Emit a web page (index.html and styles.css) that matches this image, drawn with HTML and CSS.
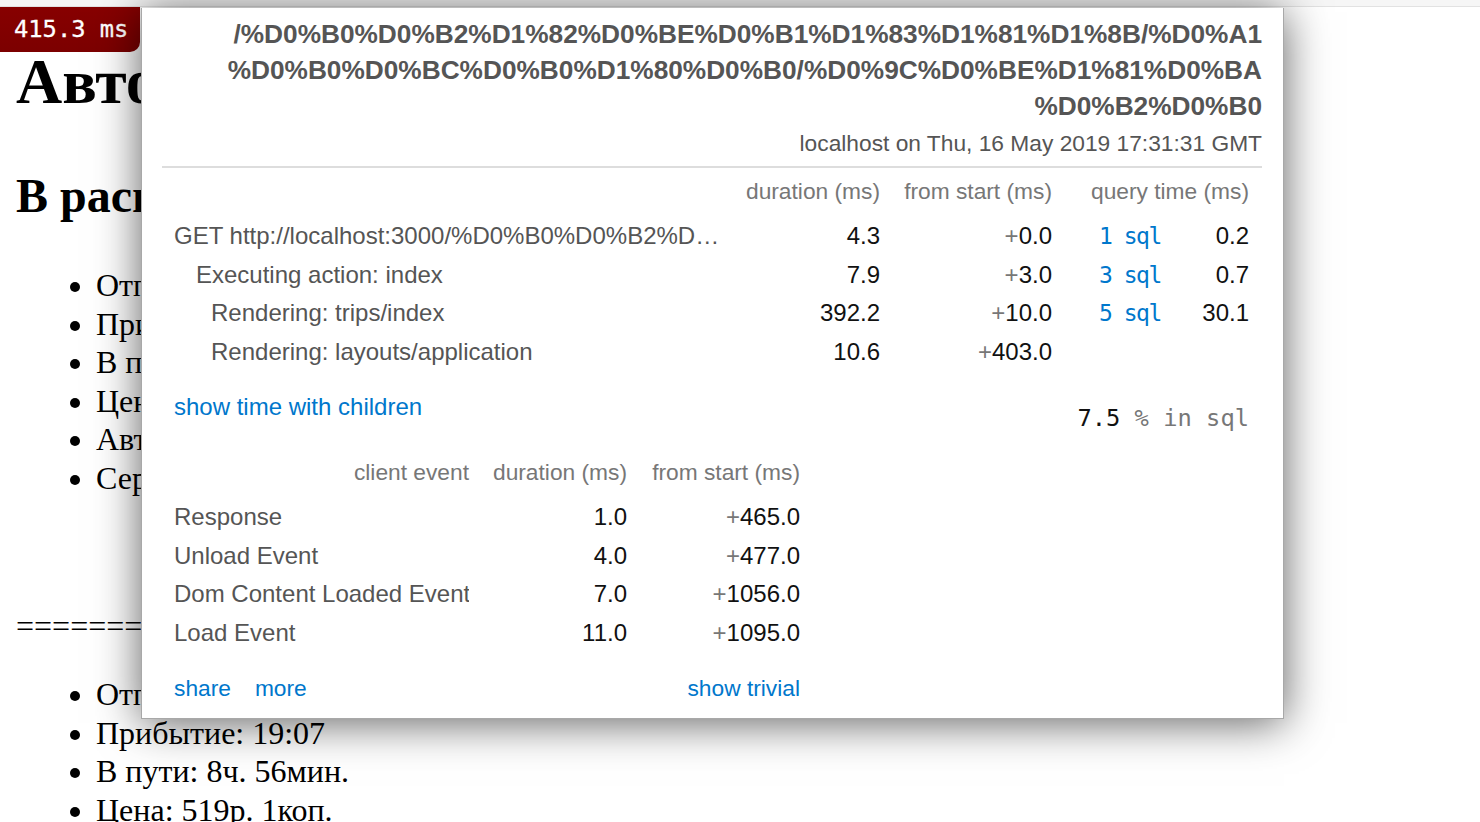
FILE: index.html
```html
<!DOCTYPE html>
<html lang="ru">
<head>
<meta charset="utf-8">
<title>Автобусы</title>
<link rel="stylesheet" href="styles.css">
</head>
<body>
<div class="topbar"></div>
<main class="page">
  <h1>Автобусы</h1>
  <h2>В расписании найдено 2 рейса</h2>
  <ul class="trip">
    <li>Отправление: 08:30</li>
    <li>Прибытие: 17:12</li>
    <li>В пути: 8ч. 42мин.</li>
    <li>Цена: 519р. 1коп.</li>
    <li>Автобус: Неоплан</li>
    <li>Серия: АА 123</li>
  </ul>
  <p class="sep">========================================</p>
  <ul class="trip second">
    <li>Отправление: 10:11</li>
    <li>Прибытие: 19:07</li>
    <li>В пути: 8ч. 56мин.</li>
    <li>Цена: 519р. 1коп.</li>
  </ul>
</main>

<div class="mp-badge">415.3 ms</div>

<div class="mp-popup">
  <div class="mp-info">
    <div class="mp-name">/%D0%B0%D0%B2%D1%82%D0%BE%D0%B1%D1%83%D1%81%D1%8B/%D0%A1<br>%D0%B0%D0%BC%D0%B0%D1%80%D0%B0/%D0%9C%D0%BE%D1%81%D0%BA<br>%D0%B2%D0%B0</div>
    <div class="mp-server">localhost on Thu, 16 May 2019 17:31:31 GMT</div>
  </div>

  <div class="mp-timings">
    <div class="th"></div>
    <div class="th num">duration (ms)</div>
    <div class="th num">from start (ms)</div>
    <div class="th num span2">query time (ms)</div>

    <div class="lbl d0">GET http://localhost:3000/%D0%B0%D0%B2%D…</div>
    <div class="num">4.3</div>
    <div class="num"><span class="plus">+</span>0.0</div>
    <div class="sql"><a href="#">1 sql</a></div>
    <div class="num">0.2</div>

    <div class="lbl d1">Executing action: index</div>
    <div class="num">7.9</div>
    <div class="num"><span class="plus">+</span>3.0</div>
    <div class="sql"><a href="#">3 sql</a></div>
    <div class="num">0.7</div>

    <div class="lbl d2">Rendering: trips/index</div>
    <div class="num">392.2</div>
    <div class="num"><span class="plus">+</span>10.0</div>
    <div class="sql"><a href="#">5 sql</a></div>
    <div class="num">30.1</div>

    <div class="lbl d2">Rendering: layouts/application</div>
    <div class="num">10.6</div>
    <div class="num"><span class="plus">+</span>403.0</div>
    <div class="sql"></div>
    <div class="num"></div>
  </div>

  <div class="mp-links">
    <a href="#" class="mp-children">show time with children</a>
    <span class="mp-pct">7.5 <span class="mp-pct-unit">% in sql</span></span>
  </div>

  <div class="mp-client">
    <div class="th num">client event</div>
    <div class="th num">duration (ms)</div>
    <div class="th num">from start (ms)</div>

    <div class="lbl">Response</div>
    <div class="num">1.0</div>
    <div class="num"><span class="plus">+</span>465.0</div>

    <div class="lbl">Unload Event</div>
    <div class="num">4.0</div>
    <div class="num"><span class="plus">+</span>477.0</div>

    <div class="lbl">Dom Content Loaded Event</div>
    <div class="num">7.0</div>
    <div class="num"><span class="plus">+</span>1056.0</div>

    <div class="lbl">Load Event</div>
    <div class="num">11.0</div>
    <div class="num"><span class="plus">+</span>1095.0</div>
  </div>

  <div class="mp-footer">
    <a href="#">share</a>
    <a href="#">more</a>
    <a href="#" class="mp-trivial">show trivial</a>
  </div>
</div>
</body>
</html>
```

FILE: styles.css
```css
html {
  overflow: hidden;
}

body {
  margin: 0;
  background: #fff;
  color: #000;
  font-family: "Liberation Serif", "Times New Roman", serif;
  font-size: 32px;
}

.topbar {
  height: 6px;
  background: #f6f6f6;
  border-bottom: 1px solid #e2e2e2;
}

.page {
  padding: 0 16px;
}

.page h1 {
  font-size: 64px;
  line-height: 74px;
  font-weight: bold;
  margin: 38px 0 49px;
  white-space: nowrap;
}

.page h2 {
  font-size: 48px;
  line-height: 56px;
  font-weight: bold;
  margin: 0;
  white-space: nowrap;
}

.trip {
  margin: 42px 0 0;
  padding-left: 80px;
  line-height: 38.6px;
}

.trip li {
  white-space: nowrap;
}

.sep {
  margin: 109px 0 0;
  line-height: 38.6px;
  white-space: nowrap;
}

.trip.second {
  margin-top: 30px;
}

/* ---------- mini profiler badge ---------- */
.mp-badge {
  position: absolute;
  left: 0;
  top: 7px;
  width: 140px;
  height: 45px;
  box-sizing: border-box;
  padding-left: 14px;
  background: linear-gradient(to bottom, #870000, #7c0000);
  border-bottom-right-radius: 10px;
  color: #fff;
  font-family: "DejaVu Sans Mono", Menlo, monospace;
  font-size: 23.75px;
  line-height: 44px;
  -webkit-text-stroke: 0.3px #fff;
  z-index: 1;
}

/* ---------- mini profiler popup ---------- */
.mp-popup {
  position: absolute;
  left: 141px;
  top: 8px;
  width: 1143px;
  height: 711px;
  box-sizing: border-box;
  background: #fff;
  border: 1px solid #a8a8a8;
  border-top: none;
  padding: 0 21px 0 20px;
  box-shadow: 0 4px 42px rgba(0, 0, 0, 0.62);
  font-family: "Liberation Sans", Arial, Helvetica, sans-serif;
  color: #555;
  z-index: 2;
}

.mp-popup a {
  color: #0077cc;
  text-decoration: none;
}

.mp-info {
  padding-top: 8px;
  padding-bottom: 8px;
  border-bottom: 2px solid #dddddd;
  text-align: right;
}

.mp-name {
  font-size: 26.25px;
  font-weight: bold;
  line-height: 36px;
  color: #555;
}

.mp-server {
  margin-top: 4px;
  font-size: 22.75px;
  line-height: 30px;
  color: #555;
}

.mp-timings {
  margin-top: 4px;
  padding: 0 13px 0 12px;
  display: grid;
  grid-template-columns: 1fr 140px 172px 127px 70px;
  font-size: 24px;
  line-height: 38.5px;
}

.th {
  font-size: 22.75px;
  line-height: 38px;
  padding-bottom: 7px;
  color: #777;
  white-space: nowrap;
}

.span2 {
  grid-column: span 2;
}

.num {
  text-align: right;
  color: #111;
  white-space: nowrap;
}

.th.num {
  color: #777;
}

.plus {
  color: #777;
}

.lbl {
  color: #555;
  white-space: nowrap;
  overflow: hidden;
}

.lbl.d1 {
  padding-left: 22px;
}

.lbl.d2 {
  padding-left: 37px;
}

.sql {
  padding-left: 47px;
  font-family: "DejaVu Sans Mono", Menlo, monospace;
  font-size: 23px;
  letter-spacing: -1.5px;
  white-space: nowrap;
}

.mp-links {
  margin-top: 21px;
  padding: 0 13px 0 12px;
  display: flex;
  justify-content: space-between;
  align-items: flex-start;
}

.mp-children {
  font-size: 24px;
  line-height: 30px;
}

.mp-pct {
  margin-top: 11px;
  font-family: "DejaVu Sans Mono", Menlo, monospace;
  font-size: 23.75px;
  line-height: 30px;
  color: #111;
}

.mp-pct-unit {
  color: #777;
}

.mp-client {
  margin-top: 20px;
  margin-left: 12px;
  display: grid;
  grid-template-columns: 295px 158px 173px;
  width: 626px;
  font-size: 24px;
  line-height: 38.5px;
}

.mp-footer {
  margin-top: 21px;
  margin-left: 12px;
  width: 626px;
  display: flex;
  gap: 24px;
  font-size: 22.75px;
  line-height: 30px;
}

.mp-trivial {
  margin-left: auto;
}
```
